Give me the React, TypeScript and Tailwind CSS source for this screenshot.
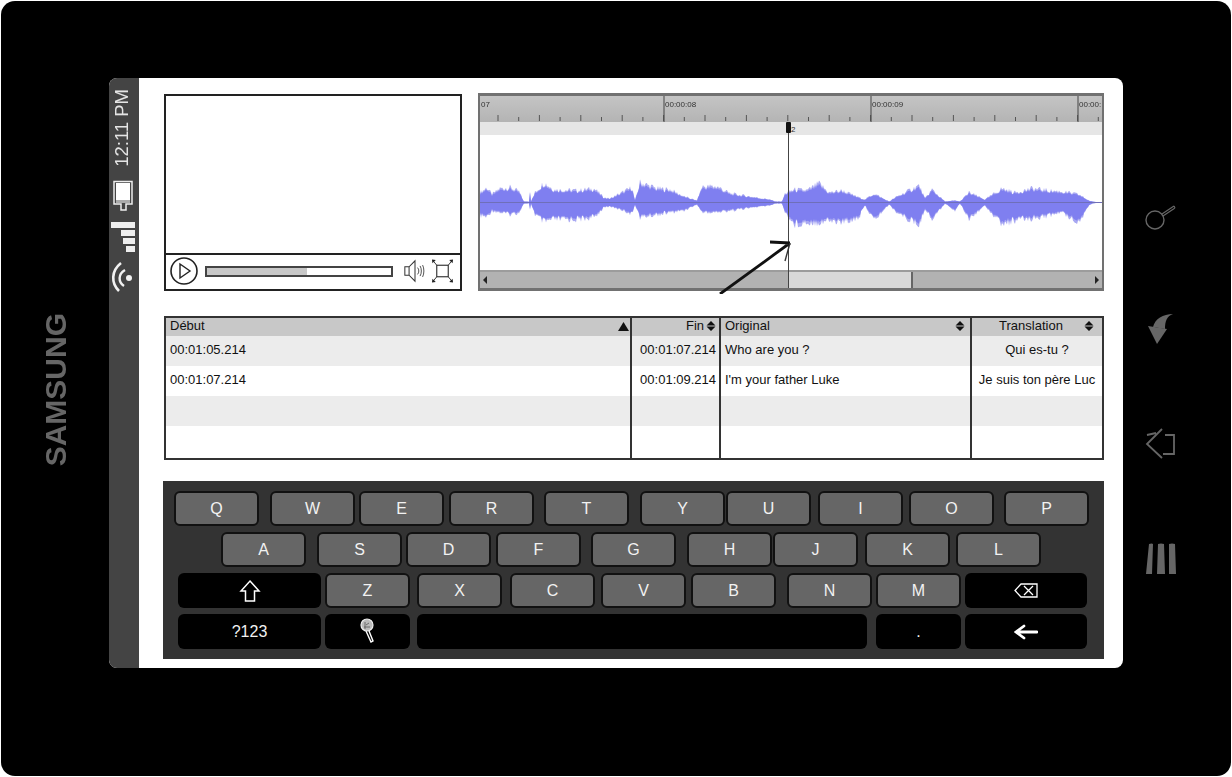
import React from 'react';

// amplitude envelope of the clip: [x, up, down]
const envelope: [number, number, number][] = [
  [0, 10, 13], [7, 15, 15], [12, 8, 8], [20, 14, 10], [30, 15, 12], [39, 11, 10], [44, 1, 1], [49, 1, 1],
  [50, 12, 8], [51, 1, 1], [55, 10, 12], [64, 20, 20], [74, 13, 17], [97, 12, 17], [114, 14, 15], [124, 5, 5],
  [130, 4, 4], [144, 11, 8], [152, 15, 12], [155, 2, 2], [160, 20, 15], [177, 14, 12], [190, 13, 10], [204, 6, 8],
  [217, 2, 2], [222, 16, 10], [237, 16, 10], [250, 9, 8], [290, 3, 3], [295, 1, 1], [302, 1, 1], [305, 9, 10],
  [314, 13, 22], [327, 12, 20], [339, 19, 20], [349, 10, 18], [362, 12, 20], [379, 5, 15], [385, 3, 3], [394, 9, 18],
  [409, 1, 2], [417, 6, 10], [439, 17, 23], [445, 4, 6], [452, 13, 17], [465, 1, 1], [475, 2, 8], [480, 1, 1],
  [489, 10, 16], [505, 3, 3], [522, 14, 22], [535, 10, 18], [552, 14, 16], [569, 12, 13], [582, 11, 10], [599, 8, 20],
  [609, 2, 3], [612, 1, 1], [622, 0, 0],
];

const noise = (i: number) => {
  const v = Math.sin(i * 12.9898) * 43758.5453;
  return v - Math.floor(v);
};

const wavePoints = (scale: number, jitter: number) => {
  const top: string[] = [];
  const bottom: string[] = [];
  let seg = 0;
  for (let x = 0; x <= 622; x++) {
    while (seg < envelope.length - 2 && envelope[seg + 1][0] <= x) seg++;
    const [x0, u0, d0] = envelope[seg];
    const [x1, u1, d1] = envelope[seg + 1];
    const t = (x - x0) / (x1 - x0 || 1);
    const n = 1 - jitter + noise(x) * jitter;
    top.push(`${x},${67.5 - (u0 + (u1 - u0) * t) * scale * n}`);
    bottom.unshift(`${x},${67.5 + (d0 + (d1 - d0) * t) * scale * n}`);
  }
  return [...top, ...bottom].join(' ');
};

const SortBoth = () => (
  <svg width="10" height="10" viewBox="0 0 10 10" className="shrink-0 -mt-[2px]">
    <path d="M5 0 L9.5 4.4 H0.5 Z M5 10 L9.5 5.6 H0.5 Z" fill="#111" />
  </svg>
);

const rows = [
  { start: '00:01:05.214', end: '00:01:07.214', original: 'Who are you ?', translation: 'Qui es-tu ?', bg: 'bg-[#ececec]', h: 'h-[30px]' },
  { start: '00:01:07.214', end: '00:01:09.214', original: "I'm your father Luke", translation: 'Je suis ton père Luc', bg: 'bg-white', h: 'h-[30px]' },
  { start: '', end: '', original: '', translation: '', bg: 'bg-[#ececec]', h: 'h-[30px]' },
  { start: '', end: '', original: '', translation: '', bg: 'bg-white', h: 'h-[32px]' },
];

const Key: React.FC<{ label: string; className: string }> = ({ label, className }) => (
  <div className={`w-[85px] h-[35px] shrink-0 flex items-center justify-center rounded-[6px] border-2 border-[#111] bg-[#666] text-[16px] text-[#f2f2f2] ${className}`}>
    {label}
  </div>
);

const Dark: React.FC<{ className: string; children?: React.ReactNode }> = ({ className, children }) => (
  <div className={`h-[35px] shrink-0 flex items-center justify-center rounded-[6px] bg-black text-[16px] text-[#f2f2f2] ${className}`}>
    {children}
  </div>
);

const StatusBar = () => (
  <div className="w-[30px] shrink-0 bg-[#444] flex flex-col items-center pt-[11px]">
    <span className="-ml-[4px] [writing-mode:vertical-rl] rotate-180 text-[18.5px] leading-[20px] text-[#e4e4e4]">12:11 PM</span>
    <svg width="24" height="32" viewBox="0 0 24 32" className="-ml-[2px] mt-[13px]">
      <path d="M3 1.5 H21 V24 H15 V30 H10 V24 H3 Z" fill="none" stroke="#eee" strokeWidth="1.5" />
      <rect x="5" y="3" width="14" height="17" fill="#fff" />
      <rect x="5" y="20" width="14" height="3" fill="#aaa" />
    </svg>
    <div className="-ml-[3px] mt-[10px] w-[24px] flex flex-col items-end gap-[2px]">
      <div className="w-[24px] h-[6px] bg-[#eee]" />
      <div className="w-[14px] h-[6px] bg-[#eee]" />
      <div className="w-[12px] h-[6px] bg-[#eee]" />
      <div className="w-[9px] h-[6px] bg-[#eee]" />
    </div>
    <svg width="24" height="32" viewBox="0 0 24 32" className="-ml-[3px] mt-[9px]">
      <path d="M10 2 C0 10 0 22 8 30" fill="none" stroke="#f2f2f2" strokeWidth="2.6" />
      <path d="M14 9 C7 13 7 21 13 25" fill="none" stroke="#f2f2f2" strokeWidth="2.4" />
      <circle cx="18" cy="17" r="3" fill="#f2f2f2" />
    </svg>
  </div>
);

const VideoPlayer = () => (
  <div className="w-[298px] h-[197px] mt-px shrink-0 border-2 border-[#222] flex flex-col">
    <div className="flex-1" />
    <div className="h-[36px] border-t-2 border-[#222] flex items-center pl-[4px] pb-[2px]">
      <svg width="28" height="28" viewBox="0 0 28 28" className="shrink-0">
        <circle cx="14" cy="14" r="13" fill="none" stroke="#222" strokeWidth="1.6" />
        <path d="M10 7 L20 14 L10 21 Z" fill="none" stroke="#222" strokeWidth="1.4" />
      </svg>
      <div className="ml-[7px] w-[188px] h-[11px] border-2 border-[#444] bg-white flex">
        <div className="w-[100px] bg-[#c8c8c8]" />
      </div>
      <svg width="22" height="26" viewBox="0 0 26 28" className="ml-[11px] shrink-0">
        <path d="M1 9 H6 L13 2 V26 L6 19 H1 Z M6 9 V19" fill="none" stroke="#333" strokeWidth="1.2" />
        <path d="M16 10 C18 12 18 16 16 18 M19 8 C21 11 21 17 19 20 M22 7 C24 11 24 17 22 21" fill="none" stroke="#333" strokeWidth="1" />
      </svg>
      <svg width="23" height="26" viewBox="0 0 24 26" className="ml-[5px] shrink-0">
        <rect x="6" y="7" width="12" height="12" fill="none" stroke="#333" strokeWidth="1.2" />
        <path d="M6 7 L2 2 M18 7 L22 2 M6 19 L2 24 M18 19 L22 24" stroke="#333" strokeWidth="1" />
        <path d="M1 1 L5 1.5 L1.5 5 Z M23 1 L19 1.5 L22.5 5 Z M1 25 L5 24.5 L1.5 21 Z M23 25 L19 24.5 L22.5 21 Z" fill="#222" />
      </svg>
    </div>
  </div>
);

const Waveform = () => (
  <div className="relative w-[626px] h-[198px] shrink-0 border-t-[3px] border-b-[3px] border-l-[2px] border-r-[2px] border-[#717171] bg-white flex flex-col">
    <div className="relative h-[26px] bg-gradient-to-b from-[#c4c4c4] to-[#b4b4b4] text-[8px] leading-[10px] text-[#333] blur-[0.4px]">
      <svg width="622" height="26" viewBox="0 0 622 26" className="absolute inset-0">
        {Array.from({ length: 31 }, (_, i) => (
          <line key={i} x1={18 + i * 20.7} x2={18 + i * 20.7} y1={i % 2 ? 21 : 19} y2="25" stroke="#555" strokeWidth="1" />
        ))}
        <path d="M184 0 V26 M391 0 V26 M598 0 V26" stroke="#444" strokeWidth="1" />
      </svg>
      <span className="absolute left-[1px] top-[4px]">07</span>
      <span className="absolute left-[185px] top-[4px]">00:00:08</span>
      <span className="absolute left-[392px] top-[4px]">00:00:09</span>
      <span className="absolute left-[599px] top-[4px]">00:00:</span>
    </div>
    <div className="h-[13px] bg-[#e6e6e6]" />
    <div className="flex-1 flex items-center overflow-hidden">
      <svg width="622" height="135" viewBox="0 0 622 135" className="blur-[0.5px]">
        <polygon points={wavePoints(1.2, 0.35)} fill="#a9a9f2" />
        <polygon points={wavePoints(1, 0.25)} fill="#7f7ff0" />
        <line x1="0" x2="622" y1="67.5" y2="67.5" stroke="#6f6fb8" strokeWidth="1.2" />
      </svg>
    </div>
    <div className="relative h-[18px] bg-[#b2b2b2] border-t-2 border-[#9c9c9c] flex items-center justify-between px-[3px]">
      <div className="w-0 h-0 border-y-[4px] border-y-transparent border-r-[4px] border-r-[#222]" />
      <div className="absolute left-[308px] top-0 bottom-0 w-[125px] bg-[#d9d9d9] border-r-2 border-[#666]" />
      <div className="w-0 h-0 border-y-[4px] border-y-transparent border-l-[4px] border-l-[#222]" />
    </div>

    {/* playhead and the arrow drawn over it */}
    <div className="absolute left-[308px] top-[26px] bottom-0 w-px bg-[#444]" />
    <div className="absolute left-[306px] top-[26px] w-[5px] h-[11px] bg-[#111] rounded-[1px]" />
    <span className="absolute left-[311px] top-[29px] text-[8px] leading-[10px] text-[#333]">2</span>
    <svg width="80" height="54" viewBox="0 0 80 54" className="absolute left-[239px] top-[144px]">
      <path d="M1 54 L71 3 M51 2 L71 3" fill="none" stroke="#111" strokeWidth="2.8" />
      <path d="M71 3 L66 21" fill="none" stroke="#333" strokeWidth="1.4" />
    </svg>
  </div>
);

const SubtitleTable = () => (
  <div className="mt-[25px] w-[940px] h-[144px] shrink-0 border-2 border-[#333] text-[13px] leading-[16px] text-[#111]">
    <div className="flex h-[18px] bg-[#c8c8c8]">
      <div className="w-[466px] border-r-2 border-[#333] flex items-center justify-between pl-[4px] pr-[1px]">
        <span className="-mt-[2px]">Début</span>
        <svg width="11" height="9" viewBox="0 0 11 9" className="-mt-[2px]"><path d="M5.5 0 L11 9 H0 Z" fill="#111" /></svg>
      </div>
      <div className="w-[89px] border-r-2 border-[#333] flex items-center justify-end gap-[2px] pr-[3px]">
        <span className="-mt-[2px]">Fin</span>
        <SortBoth />
      </div>
      <div className="w-[251px] border-r-2 border-[#333] flex items-center justify-between pl-[4px] pr-[5px]">
        <span className="-mt-[2px]">Original</span>
        <SortBoth />
      </div>
      <div className="w-[130px] flex items-center pr-[8px]">
        <span className="flex-1 -mt-[2px] text-center pl-[6px]">Translation</span>
        <SortBoth />
      </div>
    </div>
    {rows.map((r, i) => (
      <div key={i} className={`flex ${r.h} ${r.bg}`}>
        <div className="w-[466px] border-r-2 border-[#333] pl-[4px] pt-[6px]">{r.start}</div>
        <div className="w-[89px] border-r-2 border-[#333] pr-[3px] pt-[6px] text-right">{r.end}</div>
        <div className="w-[251px] border-r-2 border-[#333] pl-[4px] pt-[6px]">{r.original}</div>
        <div className="w-[130px] pt-[6px] text-center whitespace-nowrap">{r.translation}</div>
      </div>
    ))}
  </div>
);

const Keyboard = () => (
  <div className="mt-[21px] -ml-px w-[941px] h-[178px] shrink-0 bg-[#333] pt-[10px] flex flex-col gap-[6px]">
    <div className="flex">
      <Key label="Q" className="ml-[11px]" />
      <Key label="W" className="ml-[11px]" />
      <Key label="E" className="ml-[4px]" />
      <Key label="R" className="ml-[5px]" />
      <Key label="T" className="ml-[10px]" />
      <Key label="Y" className="ml-[11px]" />
      <Key label="U" className="ml-[1px]" />
      <Key label="I" className="ml-[7px]" />
      <Key label="O" className="ml-[6px]" />
      <Key label="P" className="ml-[10px]" />
    </div>
    <div className="flex">
      <Key label="A" className="ml-[58px]" />
      <Key label="S" className="ml-[11px]" />
      <Key label="D" className="ml-[4px]" />
      <Key label="F" className="ml-[5px]" />
      <Key label="G" className="ml-[10px]" />
      <Key label="H" className="ml-[11px]" />
      <Key label="J" className="ml-[1px]" />
      <Key label="K" className="ml-[7px]" />
      <Key label="L" className="ml-[6px]" />
    </div>
    <div className="flex">
      <Dark className="w-[143px] ml-[15px]">
        <svg width="22" height="24" viewBox="0 0 22 24">
          <path d="M11 2 L20 12 H15.5 V22 H6.5 V12 H2 Z" fill="none" stroke="#fff" strokeWidth="1.5" />
        </svg>
      </Dark>
      <Key label="Z" className="ml-[4px]" />
      <Key label="X" className="ml-[7px]" />
      <Key label="C" className="ml-[8px]" />
      <Key label="V" className="ml-[6px]" />
      <Key label="B" className="ml-[5px]" />
      <Key label="N" className="ml-[11px]" />
      <Key label="M" className="ml-[4px]" />
      <Dark className="w-[122px] ml-[4px]">
        <svg width="24" height="15" viewBox="0 0 24 15">
          <path d="M7 1 H23 V14 H7 L1 7.5 Z" fill="none" stroke="#fff" strokeWidth="1.3" />
          <path d="M10 3 L19 12 M19 3 L10 12" stroke="#fff" strokeWidth="1.3" />
        </svg>
      </Dark>
    </div>
    <div className="flex">
      <Dark className="w-[143px] ml-[15px]">?123</Dark>
      <Dark className="w-[85px] ml-[4px]">
        <svg width="16" height="25" viewBox="0 0 16 25" className="mb-[2px]">
          <circle cx="7" cy="7" r="6" fill="#bbb" stroke="#eee" strokeWidth="1.2" />
          <path d="M6 7 L9 5 M4 9 L10 9 M5 4 L5 11" stroke="#555" strokeWidth="0.8" />
          <path d="M9 13 L13 23 L11 24 L6 13" fill="none" stroke="#fff" strokeWidth="1.4" />
        </svg>
      </Dark>
      <Dark className="w-[450px] ml-[7px]" />
      <Dark className="w-[85px] ml-[9px] text-[11px]">.</Dark>
      <Dark className="w-[122px] ml-[4px]">
        <svg width="24" height="16" viewBox="0 0 24 16">
          <path d="M23 8 H3 M10 2 L2 8 L10 14" fill="none" stroke="#fff" strokeWidth="2.8" strokeLinecap="round" />
        </svg>
      </Dark>
    </div>
  </div>
);

const HardwareButtons = () => (
  <div className="ml-[22px] flex flex-col pt-[124px] text-[#666]">
    <svg width="32" height="32" viewBox="0 0 32 32">
      <circle cx="10" cy="18" r="9" fill="none" stroke="#666" strokeWidth="1.4" />
      <path d="M17 12 L29 4 M18 14 L30 6 M29 4 L30 6" fill="none" stroke="#666" strokeWidth="1.2" />
    </svg>
    <svg width="32" height="32" viewBox="0 0 32 32" className="mt-[78px]">
      <path d="M3 14 L22 17 L12 32 Z" fill="#666" />
      <path d="M8 15 C10 7 18 2 28 2 C22 4 20 9 20 17 Z" fill="#666" />
    </svg>
    <svg width="32" height="32" viewBox="0 0 32 32" className="mt-[84px]">
      <path d="M17 1 L2 16 L17 30 M2 7 L11 5 M20 7 H29 V26 H18" fill="none" stroke="#666" strokeWidth="1.8" />
    </svg>
    <svg width="32" height="32" viewBox="0 0 32 32" className="mt-[83px]">
      <path d="M4 1 Q7 0 8 1 L7 31 H1 Z M13 1 Q16 0 19 1 L20 31 H12 Z M24 1 Q27 0 30 1 L31 31 H24 Z" fill="#666" />
    </svg>
  </div>
);

export default function App() {
  return (
    <div className="w-[1232px] h-[777px] bg-white p-px overflow-hidden font-['Liberation_Sans',Arial,sans-serif]">
      <div className="w-full h-full rounded-[14px] bg-black flex">
        <div className="w-[108px] shrink-0 pt-[312px] pl-[41px]">
          <span className="[writing-mode:vertical-rl] rotate-180 text-[30px] leading-[28px] font-bold text-[#666]">SAMSUNG</span>
        </div>
        <div className="flex items-start pt-[77px]">
          <div className="w-[1014px] h-[590px] shrink-0 rounded-[8px] bg-white overflow-hidden flex">
            <StatusBar />
            <div className="flex flex-col pl-[25px] pt-[15px]">
              <div className="flex gap-[16px]">
                <VideoPlayer />
                <Waveform />
              </div>
              <SubtitleTable />
              <Keyboard />
            </div>
          </div>
          <HardwareButtons />
        </div>
      </div>
    </div>
  );
}
